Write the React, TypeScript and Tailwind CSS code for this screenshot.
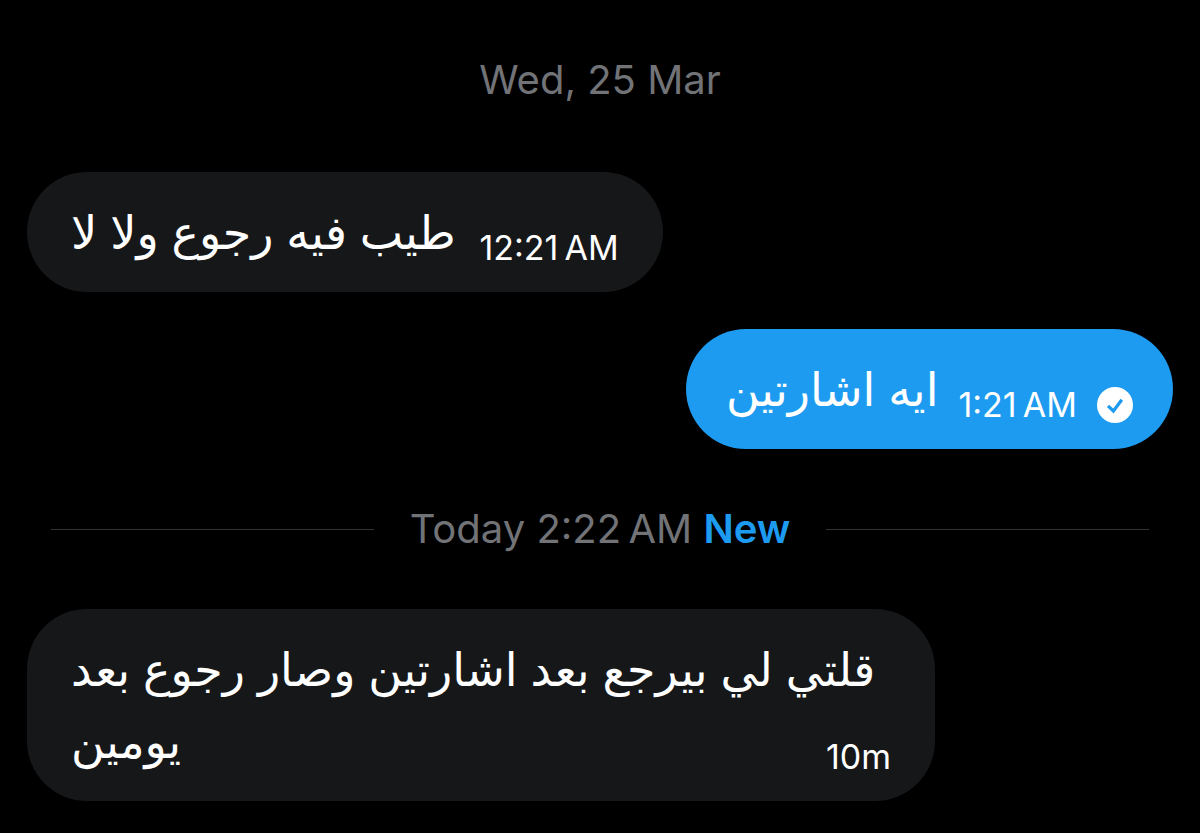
import type { ReactNode } from 'react';
import { clsx } from 'clsx';

type Message = { text: string; time: string; mine?: boolean; long?: boolean };

const earlier: Message[] = [
  { text: 'طيب فيه رجوع ولا لا', time: '12:21\u202fAM' },
  { text: 'ايه اشارتين', time: '1:21\u202fAM', mine: true }
];

const unread: Message[] = [{ text: 'قلتي لي بيرجع بعد اشارتين وصار رجوع بعد يومين', time: '10m', long: true }];

export default function App() {
  return (
    <main className="min-h-screen bg-black px-[27px] pt-14 pb-8 font-['Inter','DejaVu_Sans',sans-serif]">
      <h2 className="text-center text-[40px] leading-[48px] text-[#717377]">Wed, 25 Mar</h2>
      <MessageList className="mt-17">
        {earlier.map((message) => (
          <Bubble key={message.text} message={message} />
        ))}
      </MessageList>
      <div className="my-14 flex items-center gap-9 px-6">
        <span className="h-px flex-1 bg-[#2f3336]" />
        <h2 className="text-[40px] leading-[48px] text-[#717377]">
          Today 2:22{'\u202f'}AM <span className="font-semibold text-[#1d9bf0]">New</span>
        </h2>
        <span className="h-px flex-1 bg-[#2f3336]" />
      </div>
      <MessageList>
        {unread.map((message) => (
          <Bubble key={message.text} message={message} />
        ))}
      </MessageList>
    </main>
  );
}

function MessageList({ className, children }: { className?: string; children: ReactNode }) {
  return <ul className={clsx('flex flex-col gap-[37px]', className)}>{children}</ul>;
}

function Bubble({ message }: { message: Message }) {
  return (
    <li
      className={clsx(
        'rounded-[60px] text-white',
        message.mine ? 'self-end bg-[#1d9bf0] px-10' : 'self-start bg-[#161719] px-11',
        // long messages let the time share the last line of text
        message.long ? 'grid max-w-[908px]' : 'flex items-end',
        message.mine ? 'gap-5' : 'gap-6'
      )}
    >
      <p dir="rtl" className="col-start-1 row-start-1 py-6 text-left text-[46px] leading-[72px]">
        {message.text}
      </p>
      <div className="col-start-1 row-start-1 flex items-center gap-5 self-end justify-self-end pb-5">
        <time className="text-[34px] leading-[48px]">{message.time}</time>
        {message.mine && <SeenBadge />}
      </div>
    </li>
  );
}

function SeenBadge() {
  return (
    <svg viewBox="0 0 36 36" className="size-9 shrink-0" role="img" aria-label="Seen">
      <circle cx="18" cy="18" r="18" fill="#fff" />
      <path d="M11 18.8l5.4 5.2 8.4-11.2" fill="none" stroke="#1d9bf0" strokeWidth="3.2" />
    </svg>
  );
}
